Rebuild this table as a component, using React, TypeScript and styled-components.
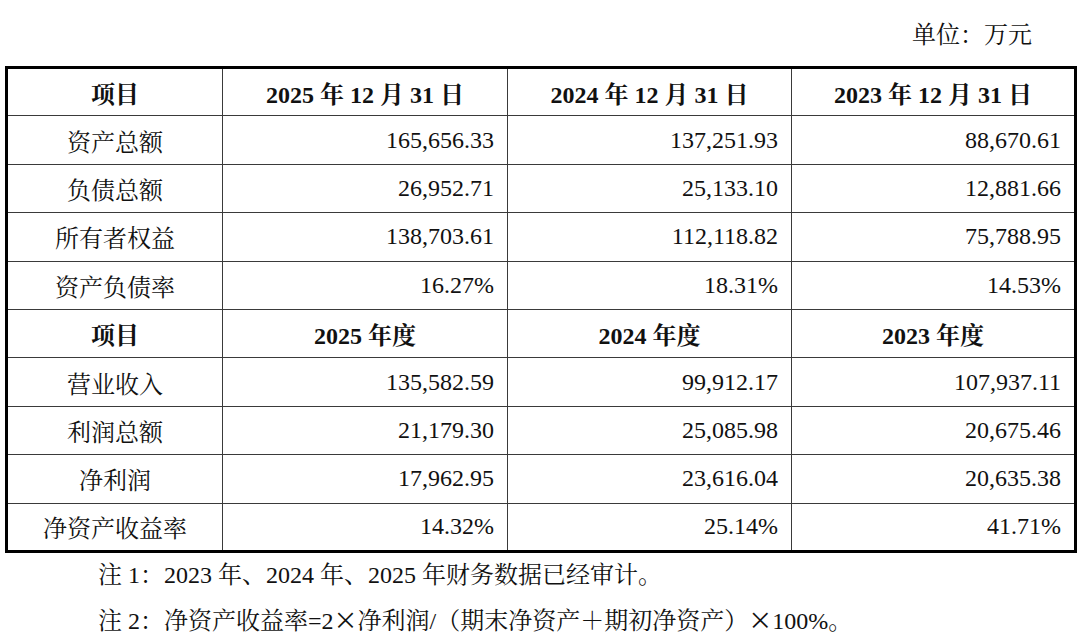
import React from "react";
import styled, { createGlobalStyle } from "styled-components";

const GlobalStyle = createGlobalStyle`
  html, body {
    margin: 0;
    padding: 0;
    background: #fff;
  }
  body {
    font-family: "Liberation Serif", "Noto Serif CJK SC", "Noto Sans CJK SC", serif;
    color: #111;
  }
`;

const Page = styled.div`
  width: 1080px;
  height: 641px;
  overflow: hidden;
  display: flex;
  flex-direction: column;
`;

const Unit = styled.div`
  font-size: 24px;
  line-height: 24px;
  text-align: right;
  padding: 23px 48px 0 0;
  height: 66px;
  box-sizing: border-box;
`;

const Cjk = styled.span`
  font-family: "Noto Sans CJK SC", sans-serif;
`;

const Table = styled.table`
  margin-left: 5px;
  width: 1069px;
  border-collapse: collapse;
  border: 3px solid #000;
  table-layout: fixed;
  font-size: 24px;
`;

const Row = styled.tr`
  height: 48.4px;
`;

const Cell = styled.td<{ $head?: boolean; $label?: boolean }>`
  border: 1px solid #3a3a3a;
  padding: 0 13px 0 0;
  text-align: ${(p) => (p.$head || p.$label ? "center" : "right")};
  font-weight: ${(p) => (p.$head ? 700 : 400)};
  ${(p) => (p.$head || p.$label ? "padding: 0;" : "")}
  white-space: nowrap;
  vertical-align: middle;
`;

const Notes = styled.div`
  padding: 10px 0 0 98px;
  font-size: 24px;
  display: flex;
  flex-direction: column;
  gap: 20px;
  line-height: 24px;
`;

const balance = [
  ["资产总额", "165,656.33", "137,251.93", "88,670.61"],
  ["负债总额", "26,952.71", "25,133.10", "12,881.66"],
  ["所有者权益", "138,703.61", "112,118.82", "75,788.95"],
  ["资产负债率", "16.27%", "18.31%", "14.53%"],
];

const income = [
  ["营业收入", "135,582.59", "99,912.17", "107,937.11"],
  ["利润总额", "21,179.30", "25,085.98", "20,675.46"],
  ["净利润", "17,962.95", "23,616.04", "20,635.38"],
  ["净资产收益率", "14.32%", "25.14%", "41.71%"],
];

const HeadRow = ({ cols }: { cols: string[] }) => (
  <Row>
    {cols.map((c) => (
      <Cell key={c} $head>
        {c}
      </Cell>
    ))}
  </Row>
);

const DataRows = ({ rows }: { rows: string[][] }) => (
  <>
    {rows.map((r) => (
      <Row key={r[0]}>
        <Cell $label>{r[0]}</Cell>
        {r.slice(1).map((v, i) => (
          <Cell key={i}>{v}</Cell>
        ))}
      </Row>
    ))}
  </>
);

export default function App() {
  return (
    <Page>
      <GlobalStyle />
      <Unit>单位：万元</Unit>
      <Table>
        <colgroup>
          <col style={{ width: 216 }} />
          <col style={{ width: 285 }} />
          <col style={{ width: 284 }} />
          <col style={{ width: 284 }} />
        </colgroup>
        <tbody>
          <HeadRow
            cols={["项目", "2025 年 12 月 31 日", "2024 年 12 月 31 日", "2023 年 12 月 31 日"]}
          />
          <DataRows rows={balance} />
          <HeadRow cols={["项目", "2025 年度", "2024 年度", "2023 年度"]} />
          <DataRows rows={income} />
        </tbody>
      </Table>
      <Notes>
        <div>注 1：2023 年、2024 年、2025 年财务数据已经审计。</div>
        <div>
          注 2：净资产收益率=2<Cjk>×</Cjk>净利润/（期末净资产＋期初净资产）<Cjk>×</Cjk>100%。
        </div>
      </Notes>
    </Page>
  );
}
